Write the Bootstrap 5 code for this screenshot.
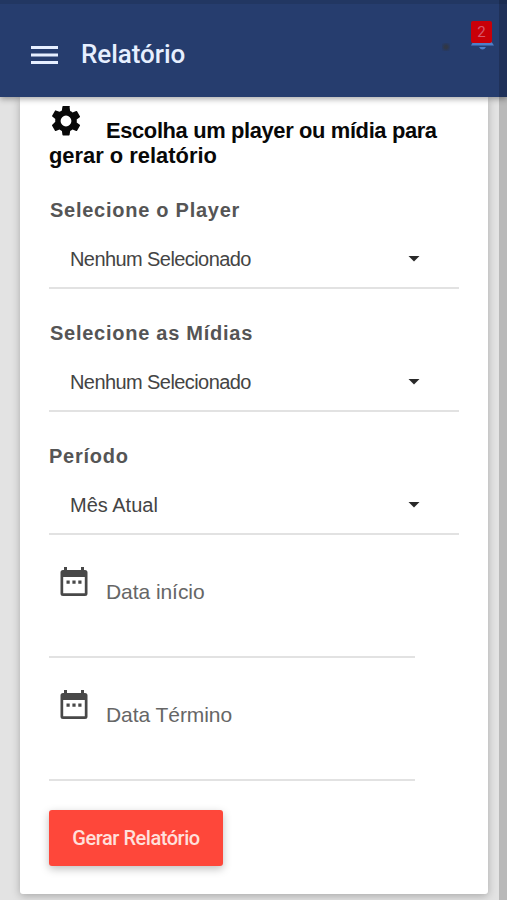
<!DOCTYPE html>
<html lang="pt-BR">
<head>
<meta charset="utf-8">
<meta name="viewport" content="width=device-width, initial-scale=1">
<title>Relatório</title>
<link href="https://cdn.jsdelivr.net/npm/bootstrap@5.3.0/dist/css/bootstrap.min.css" rel="stylesheet">
<style>
body{font-family:"Liberation Sans",Arial,sans-serif;background:#e3e3e3;width:507px;height:900px;color:#4b4b4b}
.topbar{height:97px;background:#263d6e;border-top:4px solid #223762;padding:8px 0 0 31px;box-shadow:0 2px 6px rgba(0,0,0,.35);z-index:2}
.topbar h1{font:500 26px/32px Roboto,sans-serif;color:#e6efff;letter-spacing:-.05px;margin-left:23px;padding-bottom:1px}
.edge{right:0;top:0;width:8px;height:900px;background:rgba(0,0,0,.185);z-index:3}
.dot{left:442px;top:43px;width:8px;height:8px;background:radial-gradient(#303746 25%,#29395d 60%,#263d6e)}
.bell{left:470px;top:38px}
.count{left:471px;top:21px;width:21px;height:22px;background:#c90008;color:#d6586c;font:15px/22px Roboto,sans-serif;border-radius:2px}
.panel{width:468px;height:797px;margin-left:20px;padding:0 29px;border-radius:0 0 3px 3px;box-shadow:0 2px 8px rgba(0,0,0,.26)}
.panel h2{font-size:21.9px;font-weight:700;line-height:25px;color:#080808;padding-top:9px;height:75px}
.panel h2 span{letter-spacing:-.36px}
.gear{margin:0 25px 0 2px;vertical-align:2px}
.first-group{padding-top:26px}
.field-name{font-size:20px;font-weight:700;line-height:24px;color:#555;letter-spacing:.74px;padding-left:1px}
.picker{width:410px;height:67px;border-bottom:2px solid #e2e2e2;padding:8px 39px 0 21px;font-size:20px;color:#444}
.group{height:123px;padding-top:32px}
.tight{letter-spacing:-.58px}
.arrow{width:12px;height:6px;background:#292929;clip-path:polygon(0 0,100% 0,50% 100%)}
.date{width:366px;height:123px;border-bottom:2px solid #e2e2e2;padding:32px 0 0 10px;font-size:21px;color:#666;letter-spacing:-.06px}
.date span{padding-top:9px;line-height:32px;margin-left:17px}
.send{width:174px;height:56px;margin-top:29px;background:#fe473a;color:#ffe0dc;border-radius:3px;box-shadow:0 3px 8px rgba(0,0,0,.25);font:500 20px Roboto,sans-serif;letter-spacing:-.46px}
</style>
<script src="https://cdn.jsdelivr.net/npm/bootstrap@5.3.0/dist/js/bootstrap.bundle.min.js"></script>
</head>
<body class="position-relative overflow-hidden">
<header class="topbar d-flex align-items-center position-relative">
  <svg width="27" height="20" viewBox="0 0 27 20" fill="#e6efff"><path d="M0 1h27v3H0zM0 8.500h27v3H0zM0 16h27v3H0z"/></svg>
  <h1 class="mb-0">Relatório</h1>
</header>
<div class="position-absolute dot z-3"></div>
<svg class="position-absolute bell z-3" width="25" height="12" viewBox="0 0 25 12" fill="#4d7fc9"><path d="M3 4 1 7.500h23L21 3zM9 9h7q-1.500 2.500-3.500 2.500T9 9z"/></svg>
<div class="position-absolute count text-center z-3">2</div>
<main class="panel bg-white">
  <h2 class="mb-0"><svg class="gear" width="30" height="30" viewBox="2 2 20 20" fill="#080808"><path d="M19.140 12.940c.040-.3.060-.61.060-.94s-.020-.64-.070-.94l2.030-1.580a.49.49 0 0 0 .12-.61l-1.920-3.320a.488.488 0 0 0-.59-.22l-2.390.96a7.030 7.030 0 0 0-1.620-.94l-.36-2.540A.484.484 0 0 0 13.920 2h-3.840a.484.484 0 0 0-.47.410l-.36 2.540c-.59.240-1.130.57-1.620.94l-2.390-.96a.488.488 0 0 0-.59.220L2.740 8.470a.49.49 0 0 0 .12.610l2.030 1.580c-.050.3-.090.63-.090.94s.020.64.070.94l-2.010 1.980a.49.49 0 0 0-.12.610l1.920 3.320c.12.220.37.290.59.220l2.390-.96c.5.380 1.030.7 1.620.94l.36 2.540c.050.24.24.41.48.41h3.840c.24 0 .44-.17.470-.41l.36-2.540c.59-.24 1.130-.56 1.620-.94l2.390.96c.22.080.47 0 .59-.22l1.920-3.320a.49.49 0 0 0-.12-.61zM12 15.600A3.600 3.600 0 1 1 12 8.400a3.600 3.600 0 0 1 0 7.200z"/></svg><span>Escolha um player ou mídia para</span> gerar o relatório</h2>
  <div class="first-group"><div class="field-name">Selecione o Player</div>
    <div class="picker d-flex align-items-center justify-content-between"><span class="tight">Nenhum Selecionado</span><i class="arrow"></i></div></div>
  <div class="group"><div class="field-name">Selecione as Mídias</div>
    <div class="picker d-flex align-items-center justify-content-between"><span class="tight">Nenhum Selecionado</span><i class="arrow"></i></div></div>
  <div class="group"><div class="field-name ps-0">Período</div>
    <div class="picker d-flex align-items-center justify-content-between"><span>Mês Atual</span><i class="arrow"></i></div></div>
  <div class="date d-flex align-items-start">
    <svg width="30" height="30" viewBox="0 0 30 30"><path fill="#484848" fill-rule="evenodd" d="M5 0h3v3h14V0h3v3h1q2.500 0 2.500 2.500v21q0 2.500-2.500 2.500H4q-2.500 0-2.500-2.500v-21Q1.500 3 4 3h1zM4.200 10v16.200h21.600V10zM7.500 13.500h3.200v3.200H7.500zm5.900 0h3.200v3.200h-3.200zm5.900 0h3.200v3.200h-3.200z"/></svg>
    <span>Data início</span></div>
  <div class="date d-flex align-items-start">
    <svg width="30" height="30" viewBox="0 0 30 30"><path fill="#484848" fill-rule="evenodd" d="M5 0h3v3h14V0h3v3h1q2.500 0 2.500 2.500v21q0 2.500-2.500 2.500H4q-2.500 0-2.500-2.500v-21Q1.500 3 4 3h1zM4.200 10v16.200h21.600V10zM7.500 13.500h3.200v3.200H7.500zm5.900 0h3.200v3.200h-3.200zm5.900 0h3.200v3.200h-3.200z"/></svg>
    <span>Data Término</span></div>
  <button type="button" class="btn send border-0 p-0">Gerar Relatório</button>
</main>
<div class="position-absolute edge"></div>
</body>
</html>
